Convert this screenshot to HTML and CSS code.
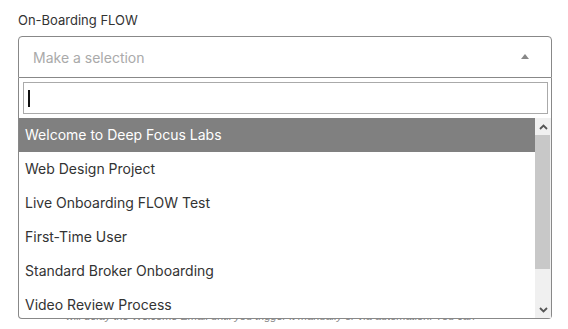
FILE: index.html
```
<!DOCTYPE html>
<html lang="en">
<head>
    <meta charset="UTF-8">
    <title>On-Boarding FLOW</title>
    <link rel="stylesheet" href="styles.css">
</head>
<body>
    <div class="field">
        <label class="field-label">On-Boarding FLOW</label>
        <div class="select">
            <div class="selection">
                <span class="placeholder">Make a selection</span>
                <span class="arrow"></span>
            </div>
            <!-- open dropdown -->
            <div class="dropdown">
                <div class="search-wrap">
                    <div class="search"><span class="caret"></span></div>
                </div>
                <div class="results">
                    <ul class="options">
                        <li class="option highlighted">Welcome to Deep Focus Labs</li>
                        <li class="option">Web Design Project</li>
                        <li class="option">Live Onboarding FLOW Test</li>
                        <li class="option">First-Time User</li>
                        <li class="option">Standard Broker Onboarding</li>
                        <li class="option">Video Review Process</li>
                    </ul>
                    <div class="scrollbar">
                        <div class="scroll-btn up"><svg width="9" height="6" viewBox="0 0 9 6"><path d="M1 5 L4.5 1.5 L8 5" fill="none" stroke="#555" stroke-width="1.8"/></svg></div>
                        <div class="scroll-track"><div class="scroll-thumb"></div></div>
                        <div class="scroll-btn down"><svg width="9" height="6" viewBox="0 0 9 6"><path d="M1 1 L4.5 4.5 L8 1" fill="none" stroke="#555" stroke-width="1.8"/></svg></div>
                    </div>
                </div>
            </div>
        </div>
        <p class="help">will delay the Welcome Email until you trigger it manually or via automation. You can</p>
    </div>
</body>
</html>
```

FILE: styles.css
```
body {
    margin: 0;
    background-color: #fff;
    color: #333;
    font-family: Inter, "Noto Sans", sans-serif;
}
.field {
    padding: 12px 16px 0 18px;
}
.field-label {
    display: block;
    font-size: 13px;
    line-height: 16px;
    color: #333;
    margin-bottom: 8px;
}
.select {
    position: relative;
}
.selection {
    height: 40px;
    border: 1px solid #888;
    border-radius: 4px 4px 0 0;
    display: flex;
    align-items: center;
    justify-content: space-between;
    padding: 0 22px 0 14px;
}
.placeholder {
    font-size: 14px;
    color: #aaa;
    margin-top: 1px;
}
.arrow {
    width: 0;
    height: 0;
    border-left: 4px solid transparent;
    border-right: 4px solid transparent;
    border-bottom: 5px solid #888;
    margin-top: -1px;
}
.dropdown {
    position: absolute;
    top: 42px;
    left: 0;
    right: 0;
    background-color: #fff;
    border: 1px solid #888;
    border-top: none;
    border-radius: 0 0 4px 4px;
    z-index: 10;
}
.search-wrap {
    padding: 4px 3px 4px 4px;
}
.search {
    height: 30px;
    border: 1px solid #aaa;
    display: flex;
    align-items: center;
    padding-left: 4px;
}
.caret {
    width: 2px;
    height: 17px;
    background-color: #111;
}
.results {
    display: flex;
    height: 200px;
    overflow: hidden;
}
.options {
    flex: 1;
    list-style: none;
    margin: 0;
    padding: 0;
}
.option {
    height: 34px;
    line-height: 34px;
    padding-left: 6px;
    font-size: 14px;
    color: #333;
}
.option.highlighted {
    background-color: #808080;
    color: #fff;
}
.scrollbar {
    width: 16px;
    background-color: #f0f0f0;
    display: flex;
    flex-direction: column;
}
.scroll-btn {
    height: 17px;
    display: flex;
    align-items: center;
    justify-content: center;
}
.scroll-track {
    flex: 1;
}
.scroll-thumb {
    height: 134px;
    margin: 0 1px 0 0;
    background-color: #c8c8c8;
}
.help {
    margin: 231px 0 0 48px;
    font-family: "Liberation Sans", Arial, sans-serif;
    font-style: italic;
    font-size: 11px;
    line-height: 14px;
    color: #888;
}
```
